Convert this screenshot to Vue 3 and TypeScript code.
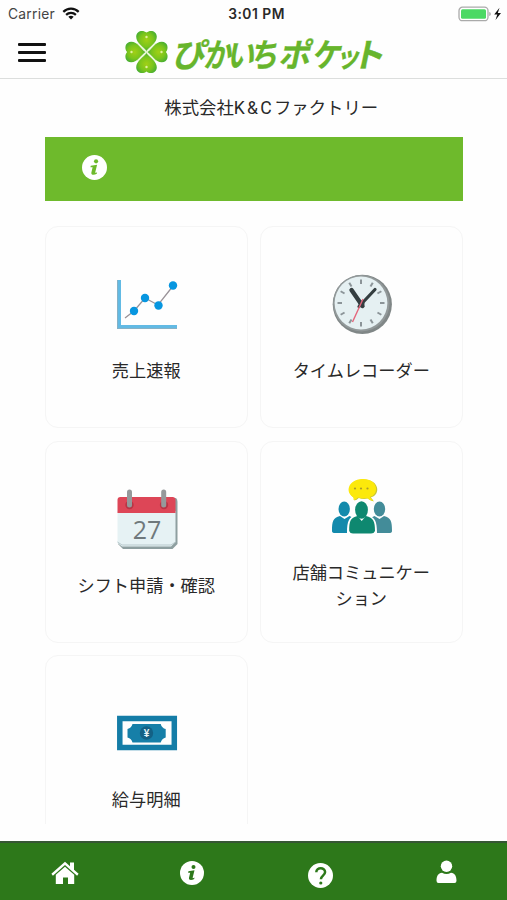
<script setup lang="ts">
interface Tile {
  icon: 'chart' | 'clock' | 'calendar' | 'people' | 'money'
  label: string
}

const tiles: Tile[] = [
  { icon: 'chart', label: '売上速報' },
  { icon: 'clock', label: 'タイムレコーダー' },
  { icon: 'calendar', label: 'シフト申請・確認' },
  { icon: 'people', label: '店舗コミュニケーション' },
  { icon: 'money', label: '給与明細' },
]

const clockMarks = Array.from({ length: 12 }, (_, i) => i * 30)
const leafAngles = [0, 90, 180, 270]
</script>

<template>
  <div class="screen">
    <div class="status">
      <div class="status-left">
        <span class="carrier">Carrier</span>
        <svg width="18" height="13" viewBox="0 0 18 13" fill="none" stroke="#111" stroke-width="2.2">
          <path d="M1.3 4.9C5.6.6 12.4.6 16.7 4.9" />
          <path d="M4.1 7.9c2.8-2.7 7-2.7 9.8 0" />
          <path d="M9 12.5 6.3 9.8c1.6-1.4 3.8-1.4 5.4 0Z" fill="#111" stroke="none" />
        </svg>
      </div>
      <span class="time">3:01 PM</span>
      <div class="status-right">
        <svg width="44" height="16" viewBox="0 0 44 16">
          <rect x="1" y="1.2" width="29" height="13.5" rx="3.5" fill="#fff" stroke="#aaa" stroke-width="1.3" />
          <rect x="3" y="3.2" width="25" height="9.5" rx="1.5" fill="#4bd964" />
          <path d="M31.4 6c1.7.5 1.7 3.5 0 4Z" fill="#999" />
          <path d="M41.5 1.7 36.2 8.6h3.1L37.5 14l5.5-7h-3.2Z" fill="#111" />
        </svg>
      </div>
    </div>

    <header class="header">
      <button class="menu" aria-label="menu"><i></i><i></i><i></i></button>
      <svg class="logo" width="276" height="52" viewBox="0 -3 276 52">
        <defs>
          <radialGradient id="leaf" gradientUnits="userSpaceOnUse" cx="0" cy="-12" r="12">
            <stop offset="0" stop-color="#a1d016" />
            <stop offset="0.55" stop-color="#7bc51c" />
            <stop offset="1" stop-color="#3faa35" />
          </radialGradient>
        </defs>
        <g transform="translate(23.5 23)">
          <g v-for="a in leafAngles" :key="a" :transform="`rotate(${a})`">
            <path d="M0-1C-2.5-5-10.3-8.8-10.3-15.3-10.3-21.3-3.4-22.6 0-19.4 3.4-22.6 10.3-21.3 10.3-15.3 10.3-8.8 2.5-5 0-1Z" fill="url(#leaf)" />
            <circle cx="0" cy="-15" r="1.2" fill="#e3f0a0" />
          </g>
          <path d="M-9-9 9 9M9-9-9 9" stroke="#d9f1b4" stroke-width="1" />
        </g>
        <g class="logo-text">
          <text transform="translate(48.5 37.5) skewX(-12) scale(1 1)">ぴ</text>
          <text transform="translate(80 37.5) skewX(-12) scale(.82 1)">か</text>
          <text transform="translate(103 37.5) skewX(-12) scale(.84 1)">い</text>
          <text transform="translate(126 37.5) skewX(-12) scale(.86 1)">ち</text>
          <text transform="translate(155 37.5) skewX(-12) scale(.96 1)">ポ</text>
          <text transform="translate(188 37.5) skewX(-12) scale(.87 1)">ケ</text>
          <text transform="translate(212 37.5) skewX(-12) scale(.75 .84)">ッ</text>
          <text transform="translate(227.5 37.5) skewX(-12) scale(1.02 1)">ト</text>
        </g>
      </svg>
    </header>

    <main class="content">
      <h1 class="company">株式会社<span class="latin">K&amp;C</span>ファクトリー</h1>
      <div class="notice">
        <svg width="25" height="25" viewBox="0 0 24 24">
          <circle cx="12" cy="12" r="12" fill="#fff" />
          <circle cx="13.5" cy="6.1" r="2" fill="#6eba2c" />
          <path d="M8.4 10.3 14.5 9.3 12.7 16.6q-.2 1.1 1.8-.1l-.3 1.4c-2.4 1.7-5.8 1.6-5.2-1.1l1.2-5-2.1-.1Z" fill="#6eba2c" />
        </svg>
      </div>

      <div class="grid">
        <a v-for="tile in tiles" :key="tile.icon" class="tile">
          <svg v-if="tile.icon === 'chart'" class="icon" viewBox="0 0 60 60">
            <path d="M2 6v47h58" fill="none" stroke="#62bae4" stroke-width="4" />
            <path d="M.5 6v48.5H60" fill="none" stroke="#91aebd" stroke-width=".8" />
            <path d="M8 44 17 37 28 24 41 31 56 12" fill="none" stroke="#999298" stroke-width="1.3" />
            <g fill="#0796e0">
              <circle cx="17" cy="37" r="4.2" /><circle cx="28" cy="24" r="4.2" />
              <circle cx="41.5" cy="31.5" r="4.2" /><circle cx="56" cy="11.5" r="4.2" />
            </g>
          </svg>

          <svg v-else-if="tile.icon === 'clock'" class="icon" viewBox="0 0 60 60">
            <circle cx="30.3" cy="30.3" r="29.6" fill="#808787" />
            <circle cx="29.3" cy="29.3" r="28.2" fill="#92999a" />
            <circle cx="29" cy="29" r="26.4" fill="#e5f0f2" />
            <g stroke="#8b9498" stroke-width="2">
              <path v-for="m in clockMarks" :key="m" d="M29 5.5v4.5" :transform="`rotate(${m} 29 29)`" />
            </g>
            <path d="M19.5 16 30.5 32" stroke="#343e40" stroke-width="4.4" stroke-linecap="round" />
            <path d="M43 15.5 27 32.5" stroke="#343e40" stroke-width="3.2" stroke-linecap="round" />
            <circle cx="29.5" cy="29.5" r="3" fill="#343e40" />
            <path d="M31 25 20.5 48" stroke="#e5657b" stroke-width="1.4" />
          </svg>

          <svg v-else-if="tile.icon === 'calendar'" class="icon" viewBox="0 0 60 60">
            <path d="M2 9h57q1.5 1 1.5 4v42l-5 5H6l-5-5V10Z" fill="#8e9fa0" />
            <path d="M.5 22h58v31l-4.5 4.5H5L.5 54Z" fill="#e6f2f4" />
            <path d="M.5 53 5 56h49l4.5-3" fill="none" stroke="#b8c9cc" stroke-width="1" />
            <path d="M.5 24V11q0-3 3-3h52q3 0 3 3v13Z" fill="#dd4657" />
            <g fill="#b83545"><circle cx="12.5" cy="16" r="4.2" /><circle cx="47" cy="16" r="4.2" /></g>
            <path d="M12.5 3v13M46.7 3v13" stroke="#96999b" stroke-width="5" stroke-linecap="round" />
            <text x="30" y="49.5" text-anchor="middle" class="day">27</text>
          </svg>

          <svg v-else-if="tile.icon === 'people'" class="icon" viewBox="0 0 60 60">
            <g fill="#138aac">
              <ellipse cx="12.2" cy="33" rx="5.7" ry="7.4" />
              <path d="M0 55c0-10 1-13 8-15l4.5 3 5-3 4 2-4 15H3q-3 0-3-2Z" />
            </g>
            <g fill="#438c99">
              <ellipse cx="47.5" cy="33" rx="5.7" ry="7.4" />
              <path d="M60 55c0-10-1-13-8-15l-4.5 3-5-3-4 2 4 15H57q3 0 3-2Z" />
            </g>
            <path d="M15 57c0-12 2-17 10-18-10-15 17-17 10 0 8 2 10 6 10 18Z" fill="#fff" />
            <g fill="#0e8870">
              <ellipse cx="29.5" cy="34" rx="6.4" ry="8.7" />
              <path d="M17.2 55c0-10 1-13 8.3-15l4.2 5 4.3-5c7.5 2 9 5 9 15q-1 2.5-4 2.5H21q-3 0-3.8-2.5Z" />
            </g>
            <path d="M21 21c-8-5-5-17 9-18 16-1 19 15 8 18q2 2 3 4-4-1-6-3-5 1-9-.5-2 2-4.5 2.5.3-1.5-.5-3Z" transform="translate(.8 .6)" fill="#c8c535" />
            <path d="M21 21c-8-5-5-17 9-18 16-1 18 15 8 18q2 2 3 4-4-1-6-3-5 1-9-.5-2 2-4.5 2.5.3-1.5-.5-3Z" fill="#fce90b" />
            <g fill="#aa9b2b"><circle cx="23" cy="12.5" r="1.1" /><circle cx="29" cy="12.5" r="1.1" /><circle cx="35.5" cy="12.5" r="1.1" /></g>
          </svg>

          <svg v-else class="icon" viewBox="0 0 60 60">
            <rect x="2.8" y="15.5" width="54.5" height="29" fill="none" stroke="#147da7" stroke-width="5.5" />
            <path d="M15.5 21h28.2q1.2 4.2 5 5v8.5q-3.8 1-5 5H15.5q-1-4-5-5V26q4-1 5-5Z" fill="#167fa8" />
            <circle cx="29.5" cy="30" r="6.7" fill="#136185" />
            <text x="29.5" y="33.6" text-anchor="middle" class="yen">¥</text>
          </svg>
          <span class="label">{{ tile.label }}</span>
        </a>
      </div>
    </main>

    <nav class="tabs">
      <a class="tab">
        <svg width="28" height="24" viewBox="0 0 28 24" fill="#fff">
          <path d="M14 .8 19 5.2V1.5h4v7.2l4.6 4.1-1.5 1.9L14 4 1.9 14.7.4 12.8Z" />
          <path d="M14 5.7 23.2 13.8V23H17v-6.5h-5V23H4.8v-9.2Z" />
        </svg>
      </a>
      <a class="tab">
        <svg width="24" height="24" viewBox="0 0 24 24">
          <circle cx="12" cy="12" r="12" fill="#fff" />
          <circle cx="13.5" cy="6.1" r="2" fill="#2d781a" />
          <path d="M8.4 10.3 14.5 9.3 12.7 16.6q-.2 1.1 1.8-.1l-.3 1.4c-2.4 1.7-5.8 1.6-5.2-1.1l1.2-5-2.1-.1Z" fill="#2d781a" />
        </svg>
      </a>
      <a class="tab help">
        <svg width="25" height="25" viewBox="0 0 25 25">
          <circle cx="12.5" cy="12.5" r="12.5" fill="#fff" />
          <path d="M8.3 9.2c0-5.3 8.8-5.1 8.8-.2 0 3.5-4.2 3.7-4.2 7.2" fill="none" stroke="#2d781a" stroke-width="2.5" />
          <circle cx="12.8" cy="20" r="1.6" fill="#2d781a" />
        </svg>
      </a>
      <a class="tab user">
        <svg width="21" height="24" viewBox="0 0 21 24" fill="#fff">
          <circle cx="10.5" cy="6.2" r="5.7" />
          <path d="M6 12.7q4.5 2.4 9 0c3.8.2 5.5 3.3 5.5 8q0 2.3-2 2.3h-16q-2 0-2-2.3c0-4.7 1.7-7.8 5.5-8Z" />
        </svg>
      </a>
    </nav>
  </div>
</template>

<style>
body {
  margin: 0;
  background: #fff;
}
</style>

<style scoped>
.screen {
  width: 507px;
  height: 900px;
  display: flex;
  flex-direction: column;
  overflow: hidden;
  background: #fefefe;
  color: #292929;
  font-family: "Noto Sans CJK JP", sans-serif;
}
.status {
  height: 26px;
  flex: none;
  display: grid;
  grid-template-columns: 1fr auto 1fr;
  align-items: center;
  padding: 1px 5px 0 8px;
  box-sizing: border-box;
  font-family: Inter, sans-serif;
  font-size: 13.8px;
}
.status-left {
  display: flex;
  align-items: center;
  gap: 7px;
}
.carrier {
  color: #444;
  letter-spacing: .25px;
}
.time {
  font-weight: 600;
  letter-spacing: .5px;
  padding-left: 3px;
}
.status-right {
  display: flex;
  justify-content: flex-end;
}
.header {
  height: 52px;
  flex: none;
  display: flex;
  align-items: center;
  border-bottom: 1px solid #dcdedd;
}
.menu {
  width: 28px;
  height: 19px;
  flex: none;
  margin: 0 77px 0 17.5px;
  padding: 0;
  border: 0;
  background: none;
  display: flex;
  flex-direction: column;
  justify-content: space-between;
}
.menu i {
  height: 3px;
  border-radius: 1px;
  background: #111;
}
.logo {
  display: block;
  flex: none;
}
.logo-text {
  fill: #67b52c;
  stroke: #67b52c;
  stroke-width: .3;
  font-size: 33px;
  font-weight: 700;
}
.content {
  height: 745px;
  flex: none;
  overflow: hidden;
  padding: 0 44.5px 0 45px;
}
.company {
  margin: 0;
  height: 58px;
  box-sizing: border-box;
  padding: 15px 0 0 35px;
  text-align: center;
  font-size: 17.4px;
  line-height: 26px;
  font-weight: 400;
}
.latin {
  font-family: Roboto, sans-serif;
  font-size: 17.6px;
  letter-spacing: 2.2px;
}
.notice {
  height: 64px;
  box-sizing: border-box;
  padding: 18px 0 0 37px;
  background: #6eba2c;
}
.notice svg {
  display: block;
}
.grid {
  margin-top: 25px;
  display: grid;
  grid-template-columns: 1fr 1fr;
  grid-auto-rows: 202px;
  gap: 12.5px;
}
.tile {
  box-sizing: border-box;
  border: 1px solid #f5f5f5;
  border-radius: 13px;
  padding: 3px 28px 0;
  display: flex;
  flex-direction: column;
  align-items: center;
  justify-content: center;
  gap: 23px;
}
.icon {
  width: 60px;
  height: 60px;
  flex: none;
  margin-left: 1px;
  overflow: visible;
}
.label {
  font-size: 17.2px;
  line-height: 26px;
  text-align: center;
  line-break: anywhere;
}
.day {
  font-family: "Open Sans", sans-serif;
  font-size: 25px;
  fill: #6f797c;
}
.yen {
  font-family: "Liberation Sans", sans-serif;
  font-size: 10px;
  font-weight: 700;
  fill: #e9f6f9;
}
.tabs {
  flex: 1;
  margin-top: 17px;
  border-top: 2px solid #365634;
  background: #2d781a;
  display: grid;
  grid-template-columns: repeat(4, 1fr);
}
.tab {
  padding: 18px 0 0 4px;
  display: flex;
  justify-content: center;
  align-items: flex-start;
}
.help {
  padding: 19.5px 0 0 7px;
}
.user {
  padding: 17px 0 0 6px;
}
</style>
